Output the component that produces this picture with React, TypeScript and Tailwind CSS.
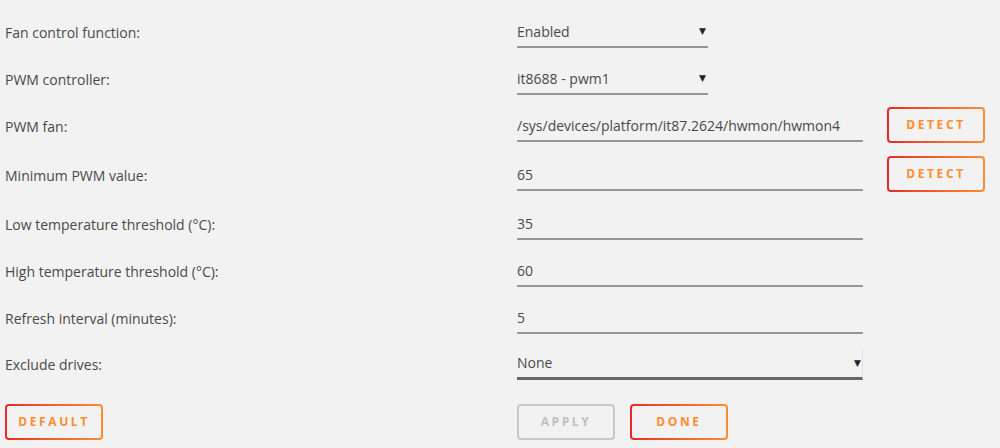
import { ReactNode } from 'react';

type Row = {
  label: string;
  value: string;
  kind: 'select' | 'text' | 'wide-select';
  height: string;
  detect?: boolean;
};

const rows: Row[] = [
  { label: 'Fan control function:', value: 'Enabled', kind: 'select', height: 'h-[48px]' },
  { label: 'PWM controller:', value: 'it8688 - pwm1', kind: 'select', height: 'h-[47px]' },
  { label: 'PWM fan:', value: '/sys/devices/platform/it87.2624/hwmon/hwmon4', kind: 'text', height: 'h-[47px]', detect: true },
  { label: 'Minimum PWM value:', value: '65', kind: 'text', height: 'h-[49px]', detect: true },
  { label: 'Low temperature threshold (°C):', value: '35', kind: 'text', height: 'h-[49px]' },
  { label: 'High temperature threshold (°C):', value: '60', kind: 'text', height: 'h-[47px]' },
  { label: 'Refresh interval (minutes):', value: '5', kind: 'text', height: 'h-[47px]' },
  { label: 'Exclude drives:', value: 'None', kind: 'wide-select', height: 'h-[46px]' },
];

function GradientButton({ children, disabled }: { children: ReactNode; disabled?: boolean }) {
  if (disabled) {
    return (
      <div className="w-[98px] h-[36px] rounded-[4px] border-2 border-[#c8c8c8] flex items-center justify-center text-[12px] font-bold tracking-[2.6px] text-[#c0c0c0]">
        {children}
      </div>
    );
  }
  return (
    <div className="w-[98px] h-[36px] rounded-[4px] p-[2px] bg-gradient-to-r from-[#e22828] to-[#ff8c2f]">
      <div className="w-full h-full rounded-[2px] bg-[#f2f2f2] flex items-center justify-center text-[12px] font-bold tracking-[2.6px] text-[#ff8c2f]">
        {children}
      </div>
    </div>
  );
}

function Field({ row }: { row: Row }) {
  if (row.kind === 'select') {
    return (
      <div className="w-[191px] h-[32px] border-b-2 border-[#959595] flex items-center justify-between pr-[2px]">
        <span>{row.value}</span>
        <span className="text-[9px] text-[#222]">▼</span>
      </div>
    );
  }
  if (row.kind === 'wide-select') {
    return (
      <div className="w-[346px] h-[32px] border-b-[3px] border-r border-b-[#666] border-r-[#e0e0e0] flex items-center justify-between pr-[1px]">
        <span>{row.value}</span>
        <span className="text-[9px] text-[#222]">▼</span>
      </div>
    );
  }
  return (
    <div className="w-[346px] h-[32px] border-b-2 border-[#959595] flex items-center">
      <span>{row.value}</span>
    </div>
  );
}

export default function App() {
  return (
    <div
      className="w-[1000px] h-[448px] bg-[#f2f2f2] text-[14px] text-[#4a4a4a] overflow-hidden"
      style={{ fontFamily: '"Open Sans", "DejaVu Sans", sans-serif' }}
    >
      <div className="flex flex-col">
        {rows.map((row) => (
          <div key={row.label} className={`${row.height} flex items-end`}>
            <div className="w-[517px] pl-[5px] h-[32px] flex items-center">{row.label}</div>
            <Field row={row} />
            {row.detect && (
              <div className="ml-[24px] mb-[-1px]">
                <GradientButton>DETECT</GradientButton>
              </div>
            )}
          </div>
        ))}
      </div>
      <div className="flex items-center mt-[24px]">
        <div className="w-[517px] pl-[5px]">
          <GradientButton>DEFAULT</GradientButton>
        </div>
        <div className="flex gap-[15px]">
          <GradientButton disabled>APPLY</GradientButton>
          <GradientButton>DONE</GradientButton>
        </div>
      </div>
    </div>
  );
}
